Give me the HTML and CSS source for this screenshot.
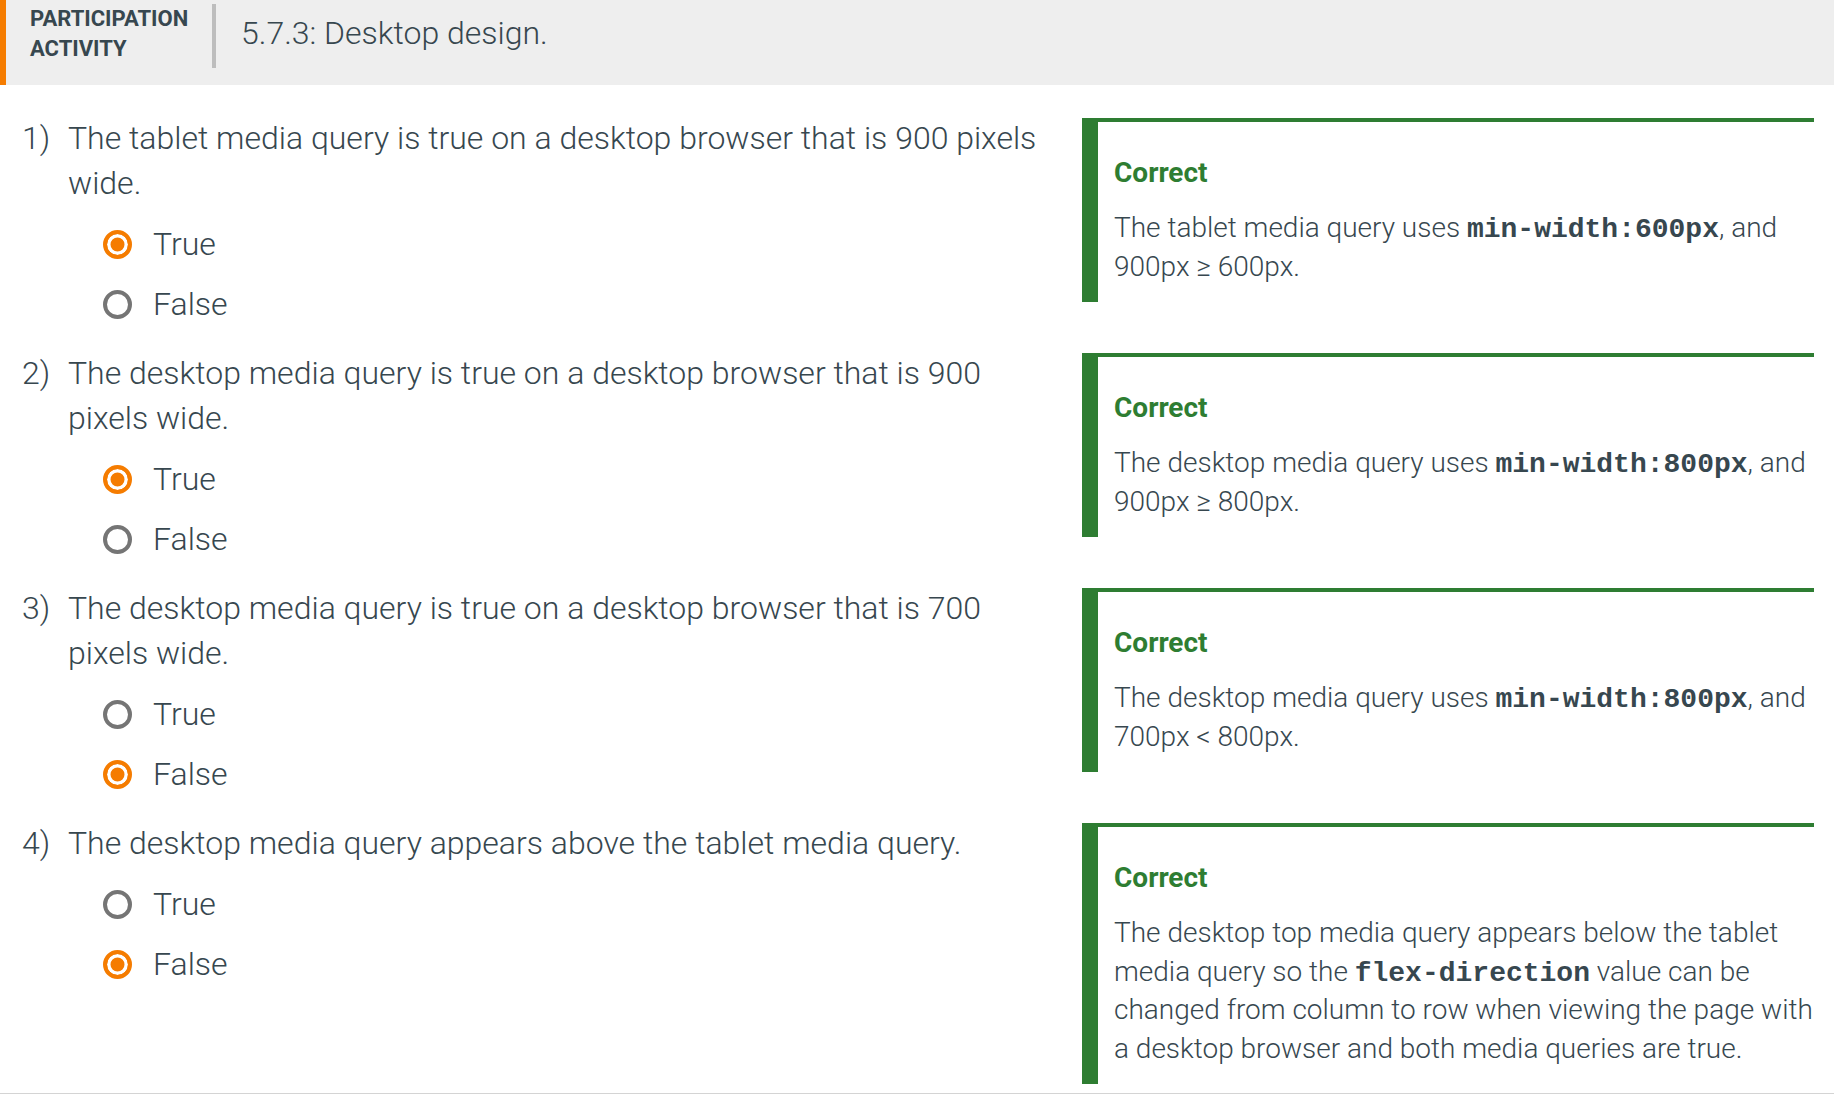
FILE: index.html
```html
<!DOCTYPE html>
<html lang="en">
<head>
<meta charset="utf-8">
<title>5.7.3: Desktop design.</title>
<link rel="stylesheet" href="styles.css">
</head>
<body>
<div class="activity">
  <header class="header">
    <div class="label"><span>Participation</span> <span>Activity</span></div>
    <div class="divider"></div>
    <h2 class="title">5.7.3: Desktop design.</h2>
  </header>
  <div class="questions">
    <div class="row">
      <div class="question">
        <div class="prompt"><span class="num">1)</span><span class="text">The tablet media query is true on a desktop browser that is 900 pixels wide.</span></div>
        <div class="options">
          <div class="option"><span class="radio checked"></span><span>True</span></div>
          <div class="option"><span class="radio"></span><span>False</span></div>
        </div>
      </div>
      <div class="feedback">
        <div class="fb-title">Correct</div>
        <p class="fb-text">The tablet media query uses <code>min-width:600px</code>, and 900px ≥ 600px.</p>
      </div>
    </div>
    <div class="row">
      <div class="question">
        <div class="prompt"><span class="num">2)</span><span class="text">The desktop media query is true on a desktop browser that is 900 pixels wide.</span></div>
        <div class="options">
          <div class="option"><span class="radio checked"></span><span>True</span></div>
          <div class="option"><span class="radio"></span><span>False</span></div>
        </div>
      </div>
      <div class="feedback">
        <div class="fb-title">Correct</div>
        <p class="fb-text">The desktop media query uses <code>min-width:800px</code>, and 900px ≥ 800px.</p>
      </div>
    </div>
    <div class="row">
      <div class="question">
        <div class="prompt"><span class="num">3)</span><span class="text">The desktop media query is true on a desktop browser that is 700 pixels wide.</span></div>
        <div class="options">
          <div class="option"><span class="radio"></span><span>True</span></div>
          <div class="option"><span class="radio checked"></span><span>False</span></div>
        </div>
      </div>
      <div class="feedback">
        <div class="fb-title">Correct</div>
        <p class="fb-text">The desktop media query uses <code>min-width:800px</code>, and 700px &lt; 800px.</p>
      </div>
    </div>
    <div class="row">
      <div class="question">
        <div class="prompt"><span class="num">4)</span><span class="text">The desktop media query appears above the tablet media query.</span></div>
        <div class="options">
          <div class="option"><span class="radio"></span><span>True</span></div>
          <div class="option"><span class="radio checked"></span><span>False</span></div>
        </div>
      </div>
      <div class="feedback">
        <div class="fb-title">Correct</div>
        <p class="fb-text">The desktop top media query appears below the tablet media query so the <code>flex-direction</code> value can be changed from column to row when viewing the page with a desktop browser and both media queries are true.</p>
      </div>
    </div>
  </div>
</div>
</body>
</html>
```

FILE: styles.css
```css
html, body {
  margin: 0;
  padding: 0;
  background: #ffffff;
}

body {
  font-family: Roboto, "Noto Sans", "Liberation Sans", sans-serif;
  color: #37474f;
}

.activity {
  border-bottom: 1px solid #d4d4d4;
  box-shadow: 0 1px 4px rgba(0, 0, 0, 0.18);
}

.header {
  display: flex;
  align-items: flex-start;
  height: 85px;
  box-sizing: border-box;
  padding: 4px 0 0 24px;
  background: #eeeeee;
  border-left: 6px solid #f57c00;
}

.label {
  width: 160px;
  margin-top: 0;
  font-size: 22px;
  font-weight: 700;
  line-height: 29.5px;
  text-transform: uppercase;
}

.label span {
  display: block;
}

.divider {
  width: 4px;
  height: 64px;
  margin-left: 22px;
  background: #bdbdbd;
}

.title {
  margin: 9px 0 0 25px;
  font-size: 32px;
  font-weight: 300;
  line-height: 40px;
}

.questions {
  display: flex;
  flex-direction: column;
  gap: 17px;
  padding: 31px 20px 9px 22px;
}

.row {
  display: flex;
  align-items: flex-start;
}

.question {
  flex: 1;
  margin-right: 30px;
}

.prompt {
  display: flex;
  font-size: 32px;
  font-weight: 300;
  line-height: 45px;
}

.num {
  width: 46px;
  flex-shrink: 0;
}

.options {
  margin-top: 8px;
  padding-left: 81px;
}

.option {
  display: flex;
  align-items: center;
  gap: 21px;
  height: 60px;
  font-size: 32px;
  font-weight: 300;
}

.radio {
  width: 21px;
  height: 21px;
  flex-shrink: 0;
  border: 4px solid #757575;
  border-radius: 50%;
  background: #ffffff;
}

.radio.checked {
  border-color: #f57c00;
  background: #f57c00;
  box-shadow: inset 0 0 0 3.5px #ffffff;
}

.feedback {
  width: 732px;
  flex-shrink: 0;
  box-sizing: border-box;
  margin-top: 2px;
  padding: 35px 0 16px 16px;
  border-top: 4px solid #2e7d32;
  border-left: 16px solid #2e7d32;
}

.fb-title {
  font-size: 28px;
  font-weight: 700;
  line-height: 32px;
  color: #2e7d32;
}

.fb-text {
  margin: 20px 0 0;
  font-size: 28px;
  font-weight: 300;
  line-height: 38.5px;
}

code {
  font-family: "Liberation Mono", "Courier New", monospace;
  font-size: 28px;
  font-weight: 700;
  line-height: 1;
}
```
